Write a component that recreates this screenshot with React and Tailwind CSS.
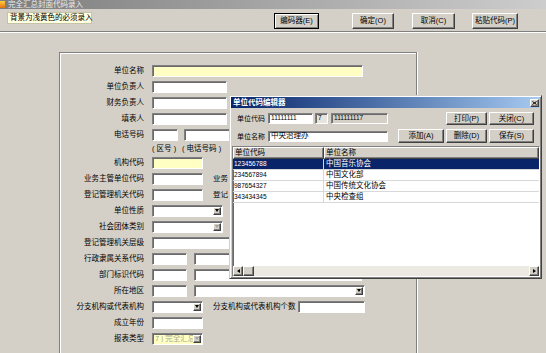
import React from "react";

// classic 3D edges
const raised =
  "border border-t-white border-l-white border-r-[#404040] border-b-[#404040] shadow-[inset_-1px_-1px_0_#808080]";
const sunken =
  "border border-t-[#808080] border-l-[#808080] border-r-white border-b-white shadow-[inset_1px_1px_0_#6a6a6a]";

function Box({ w, bg = "bg-white", h = "h-[12px]", className = "", children }) {
  return (
    <div className={`${sunken} ${w} ${h} ${bg} ${className} shrink-0 flex items-center pl-[2px] overflow-hidden whitespace-nowrap`}>
      {children}
    </div>
  );
}

function Down({ c = "border-t-black" }) {
  return <span className={`w-0 h-0 border-x-[2.5px] border-x-transparent border-t-[3px] ${c}`} />;
}

function Select({ w, bg = "bg-white", disabled = false, className = "", children }) {
  return (
    <div className={`${sunken} ${w} h-[12px] ${bg} ${className} shrink-0 flex items-center pl-[2px] pr-[1px]`}>
      <span className="flex-1 overflow-hidden whitespace-nowrap">{children}</span>
      <div className={`${raised} bg-[#d4d0c8] w-[8px] h-[8px] flex items-center justify-center`}>
        <Down c={disabled ? "border-t-[#a0a0a0]" : "border-t-black"} />
      </div>
    </div>
  );
}

function Btn({ w, h = "h-[16px]", def = false, className = "", children }) {
  const edge = def
    ? "border border-black shadow-[inset_1px_1px_0_#fff,inset_-1px_-1px_0_#808080]"
    : raised;
  return (
    <div className={`${edge} ${w} ${h} ${className} bg-[#d4d0c8] shrink-0 flex items-center justify-center whitespace-nowrap`}>
      {children}
    </div>
  );
}

function Row({ label, children, h = "h-[16px]" }) {
  return (
    <div className={`flex items-center ${h}`}>
      <span className="w-[84px] shrink-0 text-right whitespace-nowrap">{label}</span>
      <div className="ml-[8px] flex items-center">{children}</div>
    </div>
  );
}

const units = [
  { code: "123456788", name: "中国音乐协会", sel: true },
  { code: "234567894", name: "中国文化部" },
  { code: "987654327", name: "中国传统文化协会" },
  { code: "343434345", name: "中央检查组" },
];

function CodeEditor() {
  return (
    <div className="absolute left-[229px] top-[95px] w-[313px] h-[184px] bg-[#d4d0c8] p-[1px] border border-t-[#d4d0c8] border-l-[#d4d0c8] border-r-[#404040] border-b-[#404040] shadow-[inset_1px_1px_0_#fff,inset_-1px_-1px_0_#808080] flex flex-col">
      {/* title bar */}
      <div className="h-[11px] shrink-0 flex items-center bg-gradient-to-r from-[#0a246a] to-[#a6caf0] pl-[2px] pr-[1px]">
        <span className="text-white font-bold">单位代码编辑器</span>
        <div className={`${raised} ml-auto w-[9px] h-[8px] bg-[#d4d0c8] flex items-center justify-center`}>
          <svg width="5" height="4" viewBox="0 0 5 4">
            <path d="M0.5 0.5L4.5 3.5M4.5 0.5L0.5 3.5" stroke="#000" strokeWidth="1" />
          </svg>
        </div>
      </div>

      {/* code / name fields + buttons */}
      <div className="mt-[4px] h-[13px] flex items-center pl-[6px] pr-[6px]">
        <span className="w-[31px] shrink-0 whitespace-nowrap text-[7px]">单位代码</span>
        <Box w="w-[45px]" h="h-[11px]" className="text-[6.5px]">11111111</Box>
        <Box w="w-[13px]" h="h-[11px]" bg="bg-[#e6e4de]" className="ml-[2px] text-[6.5px]">7</Box>
        <Box w="w-[57px]" h="h-[11px]" bg="bg-[#d4d0c8]" className="ml-[3px] text-[6.5px]">111111117</Box>
        <Btn w="w-[41px]" h="h-[13px]" className="ml-auto">打印(P)</Btn>
        <Btn w="w-[45px]" h="h-[13px]" className="ml-[2px]">关闭(C)</Btn>
      </div>
      <div className="mt-[4px] h-[14px] flex items-center pl-[6px] pr-[6px]">
        <span className="w-[31px] shrink-0 whitespace-nowrap text-[7px]">单位名称</span>
        <Box w="w-[120px]" h="h-[11px]">中央治理办</Box>
        <Btn w="w-[46px]" h="h-[14px]" className="ml-auto">添加(A)</Btn>
        <Btn w="w-[41px]" h="h-[14px]" className="ml-[2px]">删除(D)</Btn>
        <Btn w="w-[45px]" h="h-[14px]" className="ml-[2px]">保存(S)</Btn>
      </div>

      {/* list */}
      <div className={`${sunken} mt-[3px] ml-[1px] w-[308px] flex-1 bg-white flex flex-col overflow-hidden`}>
        <div className="h-[12px] shrink-0 flex">
          <div className={`${raised} bg-[#d4d0c8] w-[91px] flex items-center pl-[1px]`}>单位代码</div>
          <div className={`${raised} bg-[#d4d0c8] flex-1 flex items-center pl-[1px]`}>单位名称</div>
        </div>
        {units.map((u) => (
          <div
            key={u.code}
            className={`h-[11px] shrink-0 flex border-b border-[#d8d8d8] ${u.sel ? "bg-[#0a246a] text-white" : ""}`}
          >
            <div className="w-[91px] border-r border-[#d8d8d8] flex items-center pl-[1px] text-[6.5px]">{u.code}</div>
            <div className="flex-1 flex items-center pl-[2px]">{u.name}</div>
          </div>
        ))}
        <div className="flex-1" />
        <div className="h-[10px] shrink-0 flex bg-[#ece9e2]">
          <div className={`${raised} bg-[#d4d0c8] w-[10px] flex items-center justify-center`}>
            <span className="w-0 h-0 border-y-[2.5px] border-y-transparent border-r-[3px] border-r-black" />
          </div>
          <div className={`${raised} bg-[#d4d0c8] w-[11px]`} />
          <div className="flex-1" />
          <div className={`${raised} bg-[#d4d0c8] w-[10px] flex items-center justify-center`}>
            <span className="w-0 h-0 border-y-[2.5px] border-y-transparent border-l-[3px] border-l-black" />
          </div>
        </div>
      </div>
    </div>
  );
}

export default function App() {
  return (
    <div className="w-[546px] h-[353px] relative overflow-hidden bg-[#d4d0c8] text-black text-[7.5px] leading-none font-['Liberation_Sans','Noto_Sans_CJK_SC',sans-serif]">
      {/* window title (inactive) */}
      <div className="h-[9px] flex items-center bg-gradient-to-r from-[#7c7c7c] via-[#a6a6a6] to-[#cdcdcd]">
        <div className="w-[5px] h-[7px] bg-gradient-to-b from-[#ffd040] to-[#e07010]" />
        <span className="ml-[3px] text-[#ececec]">完全汇总封面代码录入</span>
      </div>

      {/* toolbar */}
      <div className="h-[23px] flex items-start border-b border-[#808080]">
        <div className="ml-[7px] mt-[3px] w-[85px] h-[12px] bg-[#ffffe1] border border-[#c4c4a4] flex items-center pl-[2px] whitespace-nowrap">
          背景为浅黄色的必须录入
        </div>
        <Btn w="w-[45px]" def className="ml-[182px] mt-[4px]">编码器(E)</Btn>
        <Btn w="w-[42px]" className="ml-[33px] mt-[4px]">确定(O)</Btn>
        <Btn w="w-[43px]" className="ml-[18px] mt-[4px]">取消(C)</Btn>
        <Btn w="w-[46px]" className="ml-[17px] mt-[4px]">粘贴代码(P)</Btn>
      </div>
      <div className="h-px bg-white" />

      {/* form panel */}
      <div className="pt-[19px] pl-[59px]">
        <div className="w-[358px] h-[310px] border-t border-l border-r border-[#808080] shadow-[inset_1px_1px_0_#fff,1px_0_0_#fff] pt-[10px] flex flex-col">
          <Row label="单位名称"><Box w="w-[211px]" bg="bg-[#ffffc4]" /></Row>
          <Row label="单位负责人"><Box w="w-[75px]" /></Row>
          <Row label="财务负责人"><Box w="w-[75px]" /></Row>
          <Row label="填表人"><Box w="w-[75px]" /></Row>
          <Row label="电话号码">
            <Box w="w-[26px]" />
            <Box w="w-[80px]" className="ml-[6px]" />
          </Row>
          <Row label="" h="h-[11.5px]">
            <span className="w-[30px] whitespace-nowrap">( 区号 )</span>
            <span className="whitespace-nowrap">( 电话号码 )</span>
          </Row>
          <Row label="机构代码"><Box w="w-[51px]" bg="bg-[#ffffc4]" /></Row>
          <Row label="业务主管单位代码">
            <Box w="w-[51px]" />
            <span className="ml-[10px] w-[16px] overflow-hidden whitespace-nowrap">业务</span>
          </Row>
          <Row label="登记管理机关代码">
            <Box w="w-[51px]" />
            <span className="ml-[10px] w-[16px] overflow-hidden whitespace-nowrap">登记</span>
          </Row>
          <Row label="单位性质"><Select w="w-[71px]" /></Row>
          <Row label="社会团体类别"><Select w="w-[71px]" disabled /></Row>
          <Row label="登记管理机关层级"><Box w="w-[150px]" /></Row>
          <Row label="行政隶属关系代码">
            <Box w="w-[35px]" />
            <Box w="w-[168px]" className="ml-[7px]" />
          </Row>
          <Row label="部门标识代码">
            <Box w="w-[35px]" />
            <Box w="w-[168px]" className="ml-[7px]" />
          </Row>
          <Row label="所在地区">
            <Box w="w-[35px]" />
            <Select w="w-[171px]" className="ml-[7px]" />
          </Row>
          <Row label="分支机构或代表机构">
            <Select w="w-[51px]" />
            <span className="ml-[10px] whitespace-nowrap">分支机构或代表机构个数</span>
            <Box w="w-[67px]" className="ml-[2px]" />
          </Row>
          <Row label="成立年份"><Box w="w-[51px]" /></Row>
          <Row label="报表类型">
            <Select w="w-[51px]" bg="bg-[#ffffc4]" disabled>
              <span className="text-[#a8a890]">7 | 完全汇总</span>
            </Select>
          </Row>
        </div>
      </div>

      <CodeEditor />
    </div>
  );
}
